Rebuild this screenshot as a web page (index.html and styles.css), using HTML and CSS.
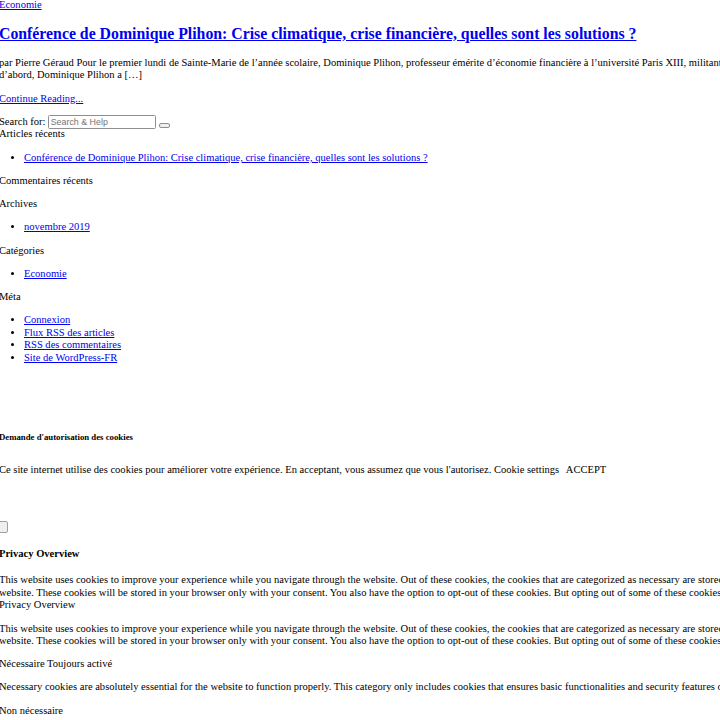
FILE: index.html
```html
<!DOCTYPE html>
<html lang="fr">
<head>
<meta charset="utf-8">
<title>Conférence de Dominique Plihon</title>
<link rel="stylesheet" href="styles.css">
</head>
<body>
<div class="page">
  <article class="post">
    <div class="post-cat"><a href="#">Economie</a></div>
    <h2 class="post-title"><a href="#">Conférence de Dominique Plihon: Crise climatique, crise financière, quelles sont les solutions ?</a></h2>
    <p class="post-excerpt">par Pierre Géraud Pour le premier lundi de Sainte-Marie de l’année scolaire, Dominique Plihon, professeur émérite d’économie financière à l’université Paris XIII, militant altermondialiste et porte-parole d’Attac, est venu nous parler de la crise climatique et de la crise financière. Tout<br>d’abord, Dominique Plihon a […]</p>
    <p class="post-more"><a href="#">Continue Reading...</a></p>
  </article>

  <form class="search-form" onsubmit="return false">
    <label for="s">Search for:</label> <input class="search-input" id="s" type="text" placeholder="Search &amp; Help"> <button class="search-btn" type="submit"></button>
  </form>

  <section class="widget">
    <div class="widget-title">Articles récents</div>
    <ul class="widget-list">
      <li><a href="#">Conférence de Dominique Plihon: Crise climatique, crise financière, quelles sont les solutions ?</a></li>
    </ul>
  </section>
  <section class="widget">
    <div class="widget-title">Commentaires récents</div>
    <ul class="widget-list"></ul>
  </section>
  <section class="widget">
    <div class="widget-title">Archives</div>
    <ul class="widget-list">
      <li><a href="#">novembre 2019</a></li>
    </ul>
  </section>
  <section class="widget">
    <div class="widget-title">Catégories</div>
    <ul class="widget-list">
      <li><a href="#">Economie</a></li>
    </ul>
  </section>
  <section class="widget">
    <div class="widget-title">Méta</div>
    <ul class="widget-list">
      <li><a href="#">Connexion</a></li>
      <li><a href="#">Flux RSS des articles</a></li>
      <li><a href="#">RSS des commentaires</a></li>
      <li><a href="#">Site de WordPress-FR</a></li>
    </ul>
  </section>

  <div class="cookie-bar">
    <h5 class="cookie-heading">Demande d'autorisation des cookies</h5>
    <div class="cookie-text">Ce site internet utilise des cookies pour améliorer votre expérience. En acceptant, vous assumez que vous l'autorisez. <span class="cookie-settings">Cookie settings</span> <span class="cookie-accept">ACCEPT</span></div>
  </div>

  <div class="cookie-modal">
    <button class="modal-close" type="button"></button>
    <h4 class="modal-title">Privacy Overview</h4>
    <div class="modal-text">This website uses cookies to improve your experience while you navigate through the website. Out of these cookies, the cookies that are categorized as necessary are stored on your browser as they are essential for the working of basic functionalities of the<br>website. These cookies will be stored in your browser only with your consent. You also have the option to opt-out of these cookies. But opting out of some of these cookies may have an effect on your browsing experience.</div>
    <div class="tab-title">Privacy Overview</div>
    <p class="tab-text">This website uses cookies to improve your experience while you navigate through the website. Out of these cookies, the cookies that are categorized as necessary are stored on your browser as they are essential for the working of basic functionalities of the<br>website. These cookies will be stored in your browser only with your consent. You also have the option to opt-out of these cookies. But opting out of some of these cookies may have an effect on your browsing experience.</p>
    <p class="tab-row">Nécessaire <span class="tab-state">Toujours activé</span></p>
    <p class="tab-text">Necessary cookies are absolutely essential for the website to function properly. This category only includes cookies that ensures basic functionalities and security features of the website. These cookies do not store any personal information.</p>
    <p class="tab-row">Non nécessaire</p>
  </div>
</div>
</body>
</html>
```

FILE: styles.css
```css
html {
  overflow: hidden;
  background: #ffffff;
}

body {
  margin: 0 0 0 -1px;
  padding-top: 1px;
  width: 2000px;
  font-family: "Liberation Serif", "Times New Roman", serif;
  font-size: 10.54px;
  line-height: 12.45px;
  color: #000000;
}

a {
  color: #0000ee;
}

p {
  margin: 10.8px 0;
}

.post-cat {
  margin-top: -2px;
}

.post-title {
  font-size: 15.8px;
  line-height: 18.6px;
  font-weight: bold;
  margin: 13.45px 0;
}

.search-form {
  margin: 0;
}

.search-input {
  box-sizing: border-box;
  width: 108px;
  height: 14px;
  margin: -1px 0;
  padding: 0 1.5px;
  border: 1px solid #8f8f8f;
  border-radius: 1.5px;
  font-family: "Liberation Sans", Arial, sans-serif;
  font-size: 8.9px;
  vertical-align: middle;
}

.search-input::placeholder {
  color: #757575;
}

.search-btn {
  display: inline-block;
  box-sizing: border-box;
  width: 11px;
  height: 5px;
  padding: 0;
  border: 1px solid #8f8f8f;
  border-radius: 2px;
  background: #efefef;
  vertical-align: bottom;
}

.widget-list {
  margin: 10.8px 0;
  padding-left: 25px;
}

.cookie-bar {
  padding-top: 42px;
}

.cookie-heading {
  font-size: 8.75px;
  line-height: 10.3px;
  font-weight: bold;
  margin: 14.97px 0;
}

.cookie-text {
  margin: 21.6px 0 0;
}

.cookie-accept {
  margin-left: 4px;
}

.cookie-modal {
  padding-top: 44.8px;
}

.modal-close {
  display: block;
  box-sizing: border-box;
  width: 11px;
  height: 12px;
  margin-left: -2px;
  padding: 0;
  border: 1px solid #a0a0a0;
  border-radius: 2px;
  background: #efefef;
}

.modal-title {
  font-size: 10.54px;
  font-weight: bold;
  margin: 14.36px 0;
}

.modal-text {
  margin: 0;
}
```
